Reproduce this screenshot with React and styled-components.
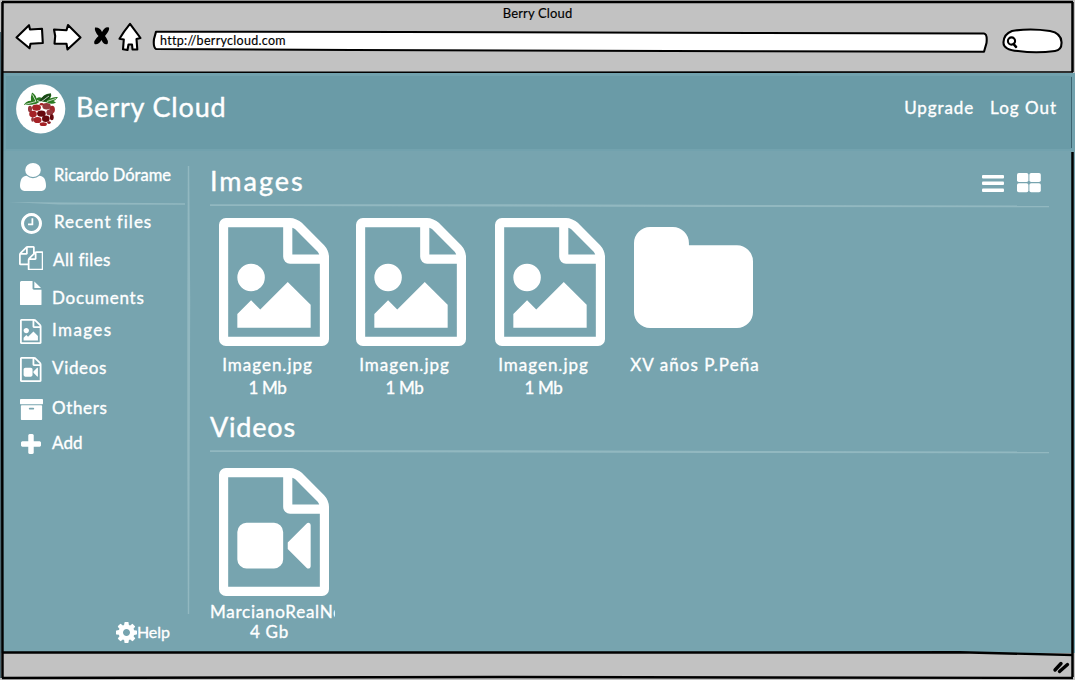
import React from 'react';
import styled, { createGlobalStyle } from 'styled-components';

const Global = createGlobalStyle`
  * { box-sizing: border-box; }
  html, body { margin: 0; padding: 0; overflow: hidden; }
  body { background: #c2c2c2; font-family: Lato, "Open Sans", sans-serif; }
`;

const Window = styled.div`
  position: relative;
  width: 1075px;
  height: 680px;
  display: flex;
  flex-direction: column;
  background: #77a4af;
  overflow: hidden;
`;
const Outline = styled.svg`
  position: absolute;
  inset: 0;
  pointer-events: none;
`;
const Text = styled.span`
  display: block;
  white-space: nowrap;
  font-size: ${p => p.$size || 17}px;
  line-height: ${p => p.$line || 22}px;
  letter-spacing: ${p => p.$track || 0}px;
  color: ${p => p.$color || '#fff'};
  -webkit-text-stroke: ${p => (p.$stroke === undefined ? 0.35 : p.$stroke)}px currentColor;
`;
const Chrome = styled.header`
  flex: 0 0 73px;
  background: #c2c2c2;
  display: flex;
  flex-direction: column;
`;
const TitleBar = styled.div`
  height: 22px;
  padding-top: 5px;
  display: flex;
  justify-content: center;
`;
const Toolbar = styled.div`
  height: 36px;
  display: flex;
  align-items: flex-start;
  padding-left: 14px;
`;
const ToolIcon = styled.svg`
  display: block;
  flex: none;
  margin-left: ${p => p.$ml || 0}px;
  fill: #fff;
  stroke: #000;
  stroke-width: 2.1;
  stroke-linejoin: round;
  stroke-linecap: round;
`;
const Field = styled.div`
  flex: none;
  width: 837px;
  height: 24px;
  margin: 7px 0 0 9px;
  padding: 3px 0 0 8px;
  background: url("data:image/svg+xml,${encodeURIComponent(
    '<svg xmlns="http://www.w3.org/2000/svg" width="837" height="24"><path d="M4 2.7L250 3L600 4L832 4.5Q835.5 5 834.5 14L832 22.7L600 22.3L200 21L4 20Q1 18 2 10Z" fill="white" stroke="black" stroke-width="2.1" stroke-linejoin="round"/></svg>'
  )}") no-repeat;
`;
const AppHeader = styled.div`
  flex: 0 0 78px;
  background: #6a9ba7;
  border: 3px solid #72a2ae;
  border-bottom-width: 2px;
  margin-left: 3px;
  display: flex;
  align-items: flex-start;
  padding: 8px 15px 0 10px;
`;
const Logo = styled.svg`
  display: block;
  flex: none;
  margin-right: 10px;
`;
const Brand = styled.div`
  padding-top: 6px;
`;
const Nav = styled.nav`
  margin-left: auto;
  padding-top: 13px;
  display: flex;
  gap: 16px;
`;
const Body = styled.div`
  flex: 1;
  display: flex;
  min-height: 0;
`;
const Sidebar = styled.aside`
  width: 210px;
  display: flex;
  flex-direction: column;
  padding: 0 0 0 19px;
`;
const User = styled.div`
  height: 51px;
  padding: 12px 0 0 1px;
  display: flex;
  gap: 8px;
`;
const Rule = styled.svg`
  display: block;
  flex: none;
  margin-left: ${p => p.$ml || 0}px;
`;
const Item = styled.div`
  flex: none;
  height: ${p => p.$h}px;
  display: grid;
  grid-template-columns: ${p => p.$col || 33}px 1fr;
  align-items: center;
`;
const IconSlot = styled.span`
  width: 24px;
  display: flex;
  justify-content: center;
`;
const Lift = styled.span`
  padding-top: ${p => Math.max(p.$by, 0) * 2}px;
  padding-bottom: ${p => Math.max(-p.$by, 0) * 2}px;
`;
const Glyph = styled.svg`
  display: block;
  flex: none;
  fill: #fff;
`;
const Help = styled.div`
  display: flex;
  align-items: center;
  margin: auto 0 10px 97px;
`;
const Main = styled.main`
  flex: 1;
  min-width: 0;
  display: flex;
  flex-direction: column;
`;
const SectionHead = styled.div`
  height: ${p => p.$h}px;
  padding: ${p => p.$top}px 34px 0 0;
  display: flex;
  justify-content: space-between;
  align-items: flex-start;
`;
const Views = styled.div`
  display: flex;
  gap: 13px;
  padding-top: 6px;
`;
const Cards = styled.div`
  display: flex;
  padding-top: ${p => p.$top}px;
  height: ${p => p.$h}px;
`;
const Card = styled.div`
  flex: none;
  width: ${p => p.$w || 139}px;
`;
const Art = styled.div`
  height: 128px;
  padding: ${p => p.$top || 0}px 0 0 9px;
`;
const Caption = styled.div`
  width: ${p => p.$w || 115}px;
  padding-top: ${p => p.$top}px;
  display: flex;
  flex-direction: column;
  align-items: ${p => (p.$clip ? 'flex-start' : 'center')};
  overflow: hidden;
`;
const SizeLine = styled.div`
  padding-left: ${p => p.$pl || 0}px;
`;
const Status = styled.footer`
  flex: 0 0 27px;
  background: #c2c2c2;
`;

const SHEET = 'M1468 380q28 28 48 76t20 88v1152q0 40-28 68t-68 28h-1344q-40 0-68-28t-28-68v-1600q0-40 28-68t68-28h896q40 0 88 20t76 48zm-444-244v376h376q-10-29-22-41l-313-313q-12-12-41-22zm384 1528v-1024h-416q-40 0-68-28t-28-68v-416h-768v1536h1280z';
const ICONS = {
  image: ['0 0 1536 1792', SHEET + 'M1280 1216v320h-1024v-192l192-192 128 128 384-384zM448 1024q-80 0-136-56t-56-136 56-136 136-56 136 56 56 136-56 136-136 56z'],
  video: ['0 0 1536 1792', SHEET + 'M768 768q52 0 90 38t38 90v384q0 52-38 90t-90 38h-384q-52 0-90-38t-38-90v-384q0-52 38-90t90-38h384zm492 2q20 8 20 30v576q0 22-20 30-8 2-12 2-14 0-23-9l-265-266v-90l265-266q9-9 23-9 4 0 12 2z'],
  folder: ['0 128 1664 1408', 'M1664 608v704q0 92-66 158t-158 66h-1216q-92 0-158-66t-66-158v-960q0-92 66-158t158-66h320q92 0 158 66t66 158v32h672q92 0 158 66t66 158z'],
  user: ['0 128 1280 1536', 'M1280 1399q0 109-62.5 187t-150.5 78h-854q-88 0-150.5-78t-62.5-187q0-85 8.5-160.5t31.5-152 58.5-131 94-89 134.5-34.5q131 128 313 128t313-128q76 0 134.5 34.5t94 89 58.5 131 31.5 152 8.5 160.5zm-256-887q0 159-112.5 271.5t-271.5 112.5-271.5-112.5-112.5-271.5 112.5-271.5 271.5-112.5 271.5 112.5 112.5 271.5z'],
  clock: ['0 128 1536 1536', 'M896 544v448q0 14-9 23t-23 9h-320q-14 0-23-9t-9-23v-64q0-14 9-23t23-9h224v-352q0-14 9-23t23-9h64q14 0 23 9t9 23zm416 352q0-148-73-273t-198-198-273-73-273 73-198 198-73 273 73 273 198 198 273 73 273-73 198-198 73-273zm224 0q0 209-103 385.5t-279.5 279.5-385.5 103-385.5-103-279.5-279.5-103-385.5 103-385.5 279.5-279.5 385.5-103 385.5 103 279.5 279.5 103 385.5z'],
  files: ['0 0 1792 1792', 'M1696 384q40 0 68 28t28 68v1216q0 40-28 68t-68 28h-960q-40 0-68-28t-28-68v-288h-544q-40 0-68-28t-28-68v-672q0-40 20-88t48-76l408-408q28-28 76-48t88-20h416q40 0 68 28t28 68v328q68-40 128-40h416zm-544 213l-299 299h299v-299zm-640-384l-299 299h299v-299zm196 647l316-316v-416h-384v416q0 40-28 68t-68 28h-416v640h512v-256q0-40 20-88t48-76zm956 804v-1152h-384v416q0 40-28 68t-68 28h-416v640h896z'],
  file: ['128 0 1536 1792', 'M1152 512v-472q22 14 36 28l408 408q14 14 28 36h-472zm-128 32q0 40 28 68t68 28h544v1056q0 40-28 68t-68 28h-1344q-40 0-68-28t-28-68v-1600q0-40 28-68t68-28h800v544z'],
  archive: ['64 128 1664 1536', 'M1088 832q0-26-19-45t-45-19h-256q-26 0-45 19t-19 45 19 45 45 19h256q26 0 45-19t19-45zm576-192v960q0 26-19 45t-45 19h-1408q-26 0-45-19t-19-45v-960q0-26 19-45t45-19h1408q26 0 45 19t19 45zm64-448v256q0 26-19 45t-45 19h-1536q-26 0-45-19t-19-45v-256q0-26 19-45t45-19h1536q26 0 45 19t19 45z'],
  plus: ['192 128 1408 1408', 'M1600 736v192q0 40-28 68t-68 28h-416v416q0 40-28 68t-68 28h-192q-40 0-68-28t-28-68v-416h-416q-40 0-68-28t-28-68v-192q0-40 28-68t68-28h416v-416q0-40 28-68t68-28h192q40 0 68 28t28 68v416h416q40 0 68 28t28 68z'],
  cog: ['128 128 1536 1536', 'M1152 896q0-106-75-181t-181-75-181 75-75 181 75 181 181 75 181-75 75-181zm512-109v222q0 12-8 23t-20 13l-185 28q-19 54-39 91 35 50 107 138 10 12 10 25t-9 23q-27 37-99 108t-94 71q-12 0-26-9l-138-108q-44 23-91 38-16 136-29 186-7 28-36 28h-222q-14 0-24.5-8.5t-11.5-21.5l-28-184q-49-16-90-37l-141 107q-10 9-25 9-14 0-25-11-126-114-165-168-7-10-7-23 0-12 8-23 15-21 51-66.5t54-70.5q-27-50-41-99l-183-27q-13-2-21-12.5t-8-23.5v-222q0-12 8-23t19-13l186-28q14-46 39-92-40-57-107-138-10-12-10-24 0-10 9-23 26-36 98.5-107.5t94.5-71.5q13 0 26 10l138 107q44-23 91-38 16-136 29-186 7-28 36-28h222q14 0 24.5 8.5t11.5 21.5l28 184q49 16 90 37l142-107q9-9 24-9 13 0 25 10 129 119 165 170 7 8 7 22 0 12-8 23-15 21-51 66.5t-54 70.5q26 50 41 98l183 28q13 2 21 12.5t8 23.5z'],
};
const Icon = ({ name, w, h }) => (
  <Glyph width={w} height={h} viewBox={ICONS[name][0]} preserveAspectRatio="none">
    <path d={ICONS[name][1]} />
  </Glyph>
);

const NAV = [
  { icon: 'clock', w: 21, h: 21, row: 36, col: 35, by: -1, label: 'Recent files', track: 1 },
  { icon: 'files', w: 24.5, h: 24.5, row: 34, col: 34, by: 2, label: 'All files', track: 0.4 },
  { icon: 'file', w: 21.5, h: 24.5, row: 36, by: 4.5, label: 'Documents', track: 0.75 },
  { icon: 'image', w: 21.5, h: 25, row: 41, by: -1.5, label: 'Images', track: 1.4 },
  { icon: 'video', w: 21.5, h: 25, row: 35, by: -1.5, label: 'Videos', track: 0.65 },
  { icon: 'archive', w: 23, h: 21, row: 44, by: -1, label: 'Others', track: 0.65 },
  { icon: 'plus', w: 20, h: 20, row: 25, by: -0.5, label: 'Add', track: 0.1 },
];

const DRUPES = [
  [20.5, 23.6, 4.4, 3.2, '#a52226'], [30.6, 22.3, 4.2, 3.2, '#95383d'], [36.2, 25.6, 2.7, 3.8, '#a0262b'], [14, 25, 2, 3.2, '#95383d'],
  [17, 30, 3.8, 3.2, '#a52226'], [25.4, 29.6, 4.3, 3.2, '#66090e'], [33.8, 28.4, 3.4, 2.9, '#95383d'],
  [21.5, 36, 4, 3.1, '#a52226'], [29.8, 34.8, 3.8, 3.2, '#66090e'], [35.8, 33.3, 1.9, 3, '#66090e'],
  [27.3, 40.2, 3.6, 1.9, '#a52226'], [16.6, 35.4, 1.4, 2.3, '#95383d'], [33, 38.6, 1.8, 1.4, '#8b1a1f'], [25.6, 20.3, 2, 1.3, '#a52226'],
];

const SectionRule = () => (
  <Rule width="839" height="4"><path d="M0 .3L300 .3L839 1.6V3.2L500 3L0 2Z" fill="#92b8c0" /></Rule>
);

export default function App() {
  return (
    <Window>
      <Global />
      <Chrome>
        <TitleBar><Text $size={13} $line={17} $color="#000" $track={0.15} $stroke={0.15}>Berry Cloud</Text></TitleBar>
        <Toolbar>
          <ToolIcon width="30" height="30" viewBox="14 22 30 30">
            <path d="M16.5 37.5L29 25.2L30 29.5L42 28.8L42.8 43L30.5 43.8L29.5 48.3Z" />
          </ToolIcon>
          <ToolIcon $ml={8} width="30" height="30" viewBox="52 22 30 30">
            <path d="M54 29.5L66.5 30.2L68 25L80.5 37.5L67.5 49.5L66.5 43.8L54.5 43.6L55.2 36Z" />
          </ToolIcon>
          <ToolIcon $ml={10} width="20" height="30" viewBox="92 22 20 30">
            <path d="M95 27.5Q100 27 102 32Q105 26 109 27.5Q110 30 105 36Q109 41 107.5 44Q104 45.5 101.5 40Q98 45.5 94.5 44Q93 41 98.5 36Q94 31 95 27.5Z" fill="#000" stroke="none" />
          </ToolIcon>
          <ToolIcon $ml={5} width="26" height="30" viewBox="117 22 26 30">
            <path d="M130 23.8L140.5 38L136.5 39L137.3 49.5L132.5 49.5L132 44.5L128.5 44.5L127.5 50L123 49.3L123.8 39.5L119.5 38.8Q124 31 130 23.8Z" />
          </ToolIcon>
          <Field><Text $size={12.5} $line={18} $color="#000" $track={0.3} $stroke={0.15}>http://berrycloud.com</Text></Field>
          <ToolIcon $ml={11} width="64" height="34" viewBox="1000 22 64 34">
            <path d="M1012 31Q1030 28 1050 31Q1061 33 1061.5 42Q1062 50 1055 51Q1036 53.5 1018 51Q1003 50 1003.5 42Q1004 34 1012 31Z" />
            <circle cx="1011.5" cy="41" r="3.6" />
            <path d="M1013.5 44L1016 46.8" strokeWidth="2.6" />
          </ToolIcon>
        </Toolbar>
      </Chrome>

      <AppHeader>
        <Logo width="50" height="50" viewBox="0 0 50 50">
          <circle cx="24.7" cy="24.8" r="24.6" fill="#fff" />
          {DRUPES.map(([x, y, rx, ry, c], i) => <ellipse key={i} cx={x} cy={y} rx={rx} ry={ry} fill={c} />)}
          <path d="M20.5 19.8Q14 21.5 8 21Q9.5 17 15 16.8Q14.5 12.5 16 8.5Q20 11 20.5 14.5Q23 12.5 26 14Q28 9.5 35 9.5Q36 12 34 14.5Q38 12.5 42 13Q40 16 37.5 17L40 18.5Q36 21 31 18.5L25 17Z" fill="#2c7a22" />
          <path d="M23 17.5Q27 10 35 9.5Q34.5 15 29 17.5Z" fill="#1a4718" />
          <path d="M9 20.5L20 17.5L16.5 10.5M21 16.5L25 18L33 12M31 17.5L40 14.5" stroke="#fff" strokeWidth="0.7" fill="none" />
        </Logo>
        <Brand><Text $size={27} $line={34} $track={0.85} $stroke={0.4}>Berry Cloud</Text></Brand>
        <Nav>
          <Text $track={0.9}>Upgrade</Text>
          <Text $track={1}>Log Out</Text>
        </Nav>
      </AppHeader>

      <Body>
        <Sidebar>
          <User>
            <Icon name="user" w={26} h={28} />
            <Text $size={16.5} $line={25} $track={0}>Ricardo Dórame</Text>
          </User>
          <Rule width="176" height="3" $ml={-10}><path d="M0 0L60 .4L176 1.2V2.8L50 2.4Z" fill="#92b8c0" /></Rule>
          {NAV.map(n => (
            <Item key={n.label} $h={n.row} $col={n.col}>
              <IconSlot><Icon name={n.icon} w={n.w} h={n.h} /></IconSlot>
              <Lift $by={n.by}><Text $track={n.track}>{n.label}</Text></Lift>
            </Item>
          ))}
          <Help>
            <Icon name="cog" w={21} h={21} />
            <Text $size={16} $track={-0.1}>Help</Text>
          </Help>
        </Sidebar>
        <Main>
          <SectionHead $h={53} $top={13}>
            <Text $size={27} $line={34} $track={2} $stroke={0.4}>Images</Text>
            <Views>
              <Glyph width="22" height="24" viewBox="0 0 22 24">
                <rect y="5" width="22" height="3.4" rx="1" /><rect y="11.5" width="22" height="3.4" rx="1" /><rect y="18.5" width="22" height="3.4" rx="1" />
              </Glyph>
              <Glyph width="24" height="24" viewBox="0 0 24 24">
                <rect y="3" width="11.4" height="9" rx="1.8" /><rect x="12.4" y="3" width="11.4" height="9" rx="1.8" /><rect y="13.3" width="11.4" height="9" rx="1.8" /><rect x="12.4" y="13.3" width="11.4" height="9" rx="1.8" />
              </Glyph>
            </Views>
          </SectionHead>
          <SectionRule />
          <Cards $top={10} $h={201}>
            {[137, 139, 139].map((w, i) => (
              <Card key={i} $w={w}>
                <Art><Icon name="image" w={110} h={128} /></Art>
                <Caption $top={7}>
                  <Text $line={23} $track={1}>Imagen.jpg</Text>
                  <Text $line={23} $track={-0.4}>1 Mb</Text>
                </Caption>
              </Card>
            ))}
            <Card $w={150}>
              <Art $top={9}><Icon name="folder" w={119} h={101} /></Art>
              <Caption $top={7} $w={140}><Text $line={23} $track={1.05}>XV años P.Peña</Text></Caption>
            </Card>
          </Cards>
          <SectionHead $h={41} $top={1}>
            <Text $size={27} $line={34} $track={0.8} $stroke={0.4}>Videos</Text>
          </SectionHead>
          <SectionRule />
          <Cards $top={14} $h={190}>
            <Card>
              <Art><Icon name="video" w={110} h={128} /></Art>
              <Caption $top={6} $w={125} $clip>
                <Text $line={20} $track={0.75}>MarcianoRealNo</Text>
                <SizeLine $pl={40}><Text $line={20} $track={0.7}>4 Gb</Text></SizeLine>
              </Caption>
            </Card>
          </Cards>
        </Main>
      </Body>
      <Status />

      <Outline width="1075" height="680" viewBox="0 0 1075 680" fill="none" stroke="#000">
        <path d="M188.5 166L189.5 300L189 450L188.5 614L188 450L188 300Z" fill="#92b8c0" stroke="#92b8c0" strokeWidth="1.4" />
        <path d="M2 2L1073 2" strokeWidth="2.5" />
        <path d="M2.5 2L2 200L2.5 678" strokeWidth="2.5" />
        <path d="M0.5 32V678" stroke="#4b6670" />
        <path d="M3 72L140 72.3L1073 72" strokeWidth="1.6" />
        <path d="M1072.5 2V72M1072.5 152V677" strokeWidth="2.5" />
        <path d="M1071.5 77V148" stroke="#3c6470" />
        <path d="M2 652.5L700 652.5L960 652.3L1073 655" strokeWidth="2.4" />
        <path d="M2 678L500 677L1073 678" strokeWidth="2.4" />
        <path d="M1055 670L1061 663.5M1059.5 671.5L1067.5 664.5" strokeWidth="3.4" strokeLinecap="round" />
      </Outline>
    </Window>
  );
}
